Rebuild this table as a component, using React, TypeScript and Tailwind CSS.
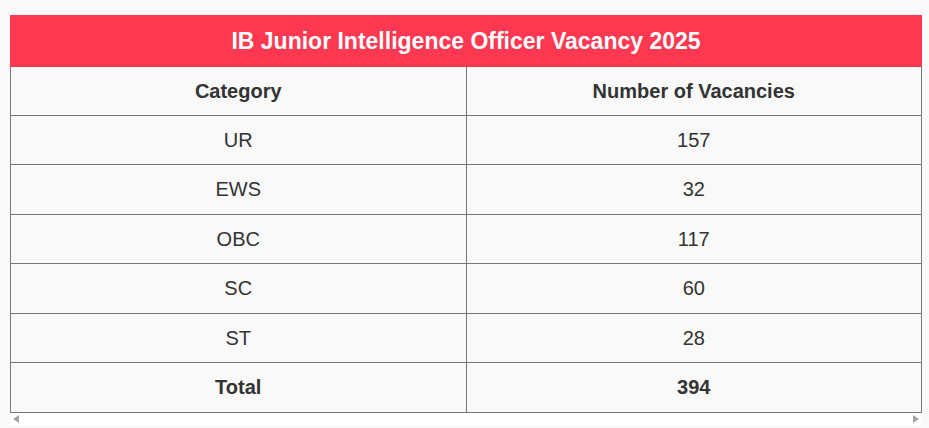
import React from "react";

const rows: [string, string][] = [
  ["UR", "157"],
  ["EWS", "32"],
  ["OBC", "117"],
  ["SC", "60"],
  ["ST", "28"],
];

export default function App() {
  return (
    <div
      className="min-h-[428px] w-full bg-[#f9f9f9] pt-[15px]"
      style={{ fontFamily: '"Liberation Sans", Arial, sans-serif' }}
    >
      <div className="ml-[10px] w-[912px]">
        <div className="flex h-[52px] items-center justify-center bg-[#fe3851] text-[23px] font-bold text-white">
          IB Junior Intelligence Officer Vacancy 2025
        </div>
        <table className="w-full table-fixed border-collapse text-[20px] text-[#333]">
          <thead>
            <tr className="h-[48px]">
              <th className="border border-t-0 border-[#777] font-bold">Category</th>
              <th className="border border-t-0 border-[#777] font-bold">Number of Vacancies</th>
            </tr>
          </thead>
          <tbody>
            {rows.map(([c, n]) => (
              <tr key={c} className="h-[49.5px]">
                <td className="border border-[#777] text-center">{c}</td>
                <td className="border border-[#777] text-center">{n}</td>
              </tr>
            ))}
            <tr className="h-[49.5px]">
              <td className="border border-[#777] text-center font-bold">Total</td>
              <td className="border border-[#777] text-center font-bold">394</td>
            </tr>
          </tbody>
        </table>
        <div className="flex h-[13px] items-center justify-between bg-white px-[3px]">
          <svg width="6" height="8" viewBox="0 0 6 8">
            <polygon points="6,0 6,8 0,4" fill="#a3a3a3" />
          </svg>
          <svg width="6" height="8" viewBox="0 0 6 8">
            <polygon points="0,0 0,8 6,4" fill="#a3a3a3" />
          </svg>
        </div>
      </div>
    </div>
  );
}
